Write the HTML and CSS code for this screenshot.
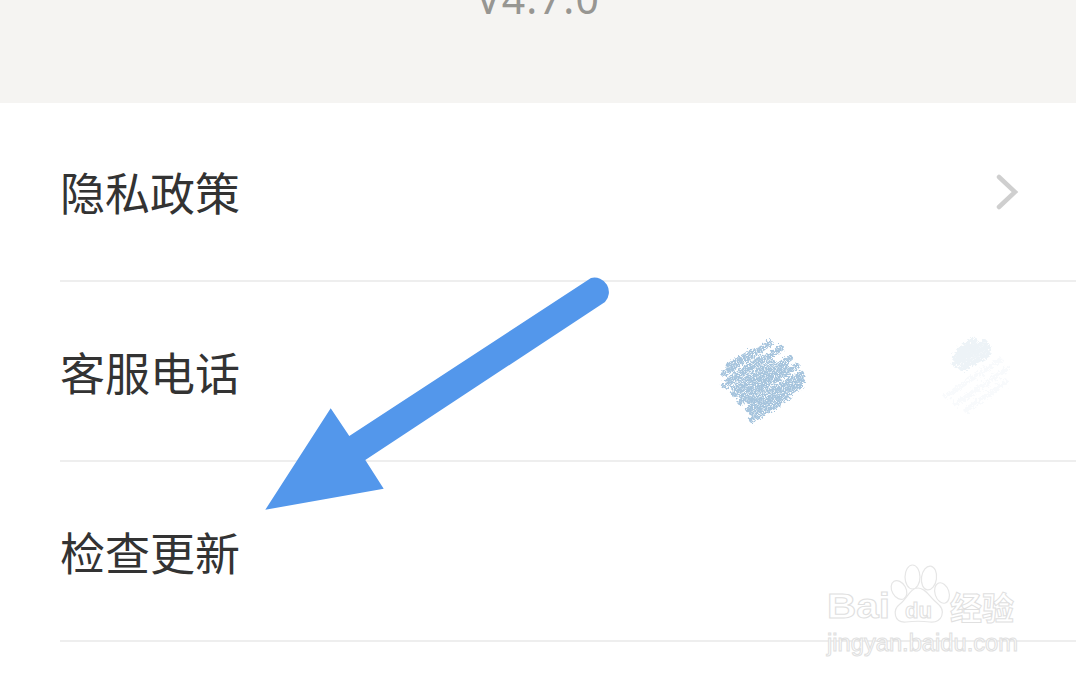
FILE: index.html
```html
<!DOCTYPE html>
<html lang="zh-CN">
<head>
<meta charset="utf-8">
<title>关于</title>
<link rel="stylesheet" href="styles.css">
</head>
<body>
<div class="page">
  <header class="top"><div class="version">V4.7.0</div></header>
  <ul class="list">
    <li class="row"><span class="label">隐私政策</span>
      <svg class="chevron" viewBox="0 0 24 36"><path d="M3 3 L19 18 L3 33"/></svg>
    </li>
    <li class="row"><span class="label">客服电话</span></li>
    <li class="row"><span class="label">检查更新</span></li>
  </ul>
  <svg class="overlay" viewBox="0 0 1076 680">
    <defs>
      <filter id="grain" x="-20%" y="-20%" width="140%" height="140%">
        <feTurbulence type="fractalNoise" baseFrequency="0.5" numOctaves="2" seed="4" result="n"/>
        <feDisplacementMap in="SourceGraphic" in2="n" scale="7" result="d"/>
        <feTurbulence type="fractalNoise" baseFrequency="1.1" numOctaves="1" seed="9"/>
        <feColorMatrix type="matrix" values="0 0 0 0 0  0 0 0 0 0  0 0 0 0 0  0 0 0 -5 3.6" result="holes"/>
        <feComposite in="d" in2="holes" operator="in"/>
      </filter>
      <filter id="smear" x="-20%" y="-20%" width="140%" height="140%">
        <feTurbulence type="fractalNoise" baseFrequency="0.4" numOctaves="2" seed="7" result="n"/>
        <feDisplacementMap in="SourceGraphic" in2="n" scale="8"/>
      </filter>
    </defs>
    <g class="scrawl" filter="url(#grain)">
      <path d="M728 366 L752 352"/><path d="M724 374 L770 343"/><path d="M729 380 L762 358"/>
      <path d="M724 386 L781 348"/><path d="M734 388 L772 362"/><path d="M734 394 L790 358"/>
      <path d="M742 396 L786 366"/><path d="M740 402 L797 366"/><path d="M750 402 L802 374"/>
      <path d="M748 409 L802 380"/><path d="M752 413 L800 386"/><path d="M759 412 L788 396"/>
      <path d="M752 420 L778 404"/>
    </g>
    <g class="scrawl-faint" filter="url(#smear)">
      <path d="M958 352 L974 340"/><path d="M955 358 L984 342"/><path d="M955 364 L988 347"/><path d="M962 368 L988 354"/>
    </g>
    <g class="scrawl-ghost" filter="url(#smear)">
      <path d="M946 396 L1000 360"/><path d="M956 404 L1008 368"/><path d="M966 410 L1006 382"/>
    </g>
    <path class="arrow" d="M265.3 509.7 L330.7 408.3 L349.3 436 L591 278 A14.5 14.5 0 0 1 605 302 L365.3 460 L383.7 488.7 Z"/>
    <g class="mark">
      <text class="mark-bai" x="827" y="618" textLength="63" lengthAdjust="spacingAndGlyphs">Bai</text>
      <ellipse cx="912.5" cy="577" rx="7.5" ry="12"/>
      <ellipse cx="929" cy="578" rx="7.5" ry="12" transform="rotate(8 929 578)"/>
      <ellipse cx="899" cy="590" rx="7" ry="10" transform="rotate(-30 899 590)"/>
      <ellipse cx="942" cy="593" rx="7" ry="10.5" transform="rotate(-18 942 593)"/>
      <path d="M918 588 C926 588 930 598 937 603 C947 611 942 623 930 622 C922 621 914 621 906 622 C894 623 892 610 900 604 C907 599 910 588 918 588 Z"/>
      <text class="mark-du" x="905" y="618" textLength="27" lengthAdjust="spacingAndGlyphs">du</text>
      <text class="mark-cn" x="950" y="620">经验</text>
      <text class="mark-url" x="827" y="651" textLength="191" lengthAdjust="spacingAndGlyphs">jingyan.baidu.com</text>
    </g>
  </svg>
</div>
</body>
</html>
```
FILE: styles.css
```css
html, body { margin: 0; padding: 0; background: #fff; }
.page {
  position: relative;
  width: 1076px;
  height: 680px;
  overflow: hidden;
  font-family: "Noto Sans CJK SC", "Noto Sans", sans-serif;
}
.top {
  height: 103px;
  background: #f5f4f2;
  overflow: hidden;
  display: flex;
  justify-content: center;
}
.version {
  margin-top: -31px;
  font-family: "Noto Sans", sans-serif;
  font-size: 41px;
  line-height: 58px;
  letter-spacing: 1.2px;
  color: #979692;
}
.list { list-style: none; margin: 0; padding: 0 0 0 60px; }
.row {
  box-sizing: border-box;
  height: 179px;
  border-bottom: 2px solid #eeeeee;
  padding-right: 56px;
  display: flex;
  align-items: center;
  justify-content: space-between;
}
.row + .row { height: 180px; padding-top: 2px; }
.label {
  font-size: 45px;
  line-height: 60px;
  color: #333333;
}
.chevron { width: 24px; height: 36px; fill: none; stroke: #cfcfcf; stroke-width: 4.5; stroke-linecap: round; }
.overlay { position: absolute; left: 0; top: 0; width: 1076px; height: 680px; }
.arrow { fill: #5397eb; }
.scrawl path { fill: none; stroke: #a6c4dd; stroke-width: 6; stroke-linecap: round; }
.scrawl-faint path { fill: none; stroke: #edf3f7; stroke-width: 6; stroke-linecap: round; }
.scrawl-ghost path { fill: none; stroke: #f8fafc; stroke-width: 5; stroke-linecap: round; }
.mark ellipse, .mark path { fill: #fff; stroke: #e6e6e6; stroke-width: 1.2; }
.mark text { fill: #fff; stroke: #e0e0e0; stroke-width: 1; }
.mark-bai { font-family: "Liberation Sans", sans-serif; font-weight: 700; font-size: 35px; }
.mark-du { font-family: "Liberation Sans", sans-serif; font-weight: 700; font-size: 22px; }
.mark-cn { font-family: "Noto Sans CJK SC", sans-serif; font-weight: 700; font-size: 32px; }
.mark-url { font-family: "Liberation Sans", sans-serif; font-size: 23px; }
```
